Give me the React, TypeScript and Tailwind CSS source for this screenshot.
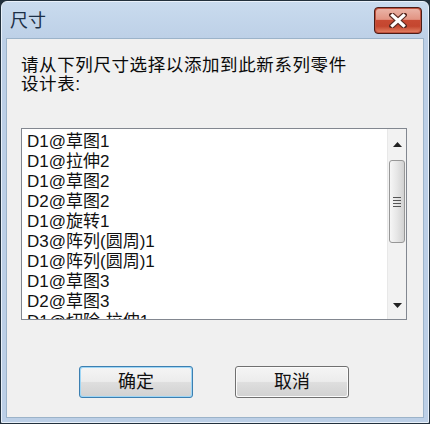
import React from "react";

const items = [
  "D1@草图1",
  "D1@拉伸2",
  "D1@草图2",
  "D2@草图2",
  "D1@旋转1",
  "D3@阵列(圆周)1",
  "D1@阵列(圆周)1",
  "D1@草图3",
  "D2@草图3",
  "D1@切除-拉伸1",
];

const font = { fontFamily: '"Liberation Sans", "Noto Sans CJK SC", sans-serif' };

function CloseButton() {
  return (
    <div className="w-[48px] h-[27px] rounded-[4px] border border-[#4a1d18] p-px bg-[#c0533f]">
      <div className="w-full h-full rounded-[3px] flex items-center justify-center bg-[linear-gradient(to_bottom,#eab3a6_0%,#e29483_45%,#c84a33_50%,#c4462f_75%,#e07c5f_100%)]">
        <svg width="18" height="15" viewBox="0 0 18 15">
          <path d="M3 2 L15 13 M15 2 L3 13" stroke="#5a2a22" strokeWidth="5.5" strokeLinecap="square" />
          <path d="M3.5 2.5 L14.5 12.5 M14.5 2.5 L3.5 12.5" stroke="#ffffff" strokeWidth="3.2" strokeLinecap="square" />
        </svg>
      </div>
    </div>
  );
}

function Scrollbar() {
  return (
    <div className="w-[19px] h-full flex flex-col bg-[#f2f2f2] border-l border-[#e8e8e8]">
      <div className="h-[31px] flex items-center justify-center">
        <svg width="9" height="5" viewBox="0 0 9 5">
          <path d="M0 5 L4.5 0 L9 5 Z" fill="#222" />
        </svg>
      </div>
      <div className="h-[83px] mx-[1px] rounded-[3px] border border-[#979797] bg-[linear-gradient(to_right,#f6f6f6,#e6e6e6_50%,#d2d2d2)] flex items-center justify-center">
        <div className="flex flex-col gap-[2px]">
          <div className="w-[8px] h-px bg-[#555]" />
          <div className="w-[8px] h-px bg-[#555]" />
          <div className="w-[8px] h-px bg-[#555]" />
          <div className="w-[8px] h-px bg-[#555]" />
        </div>
      </div>
      <div className="flex-1" />
      <div className="h-[28px] flex items-center justify-center">
        <svg width="9" height="5" viewBox="0 0 9 5">
          <path d="M0 0 L9 0 L4.5 5 Z" fill="#222" />
        </svg>
      </div>
    </div>
  );
}

function Button({ label, primary }: { label: string; primary?: boolean }) {
  return (
    <div
      className={
        "w-[114px] h-[32px] rounded-[3px] border p-px " +
        (primary ? "border-[#3c7fb1] bg-[#9fd6f5]" : "border-[#707070] bg-[#fbfbfb]")
      }
    >
      <div className="w-full h-full rounded-[2px] flex items-center justify-center bg-[linear-gradient(to_bottom,#f4f4f4_0%,#ececec_48%,#dedede_52%,#d2d2d2_100%)] text-[18px] leading-none text-[#111]">
        {label}
      </div>
    </div>
  );
}

export default function App() {
  return (
    <div className="w-[430px] h-[424px] bg-[#22303c] p-px" style={font}>
      <div className="w-full h-full flex flex-col rounded-t-[6px] bg-[linear-gradient(to_bottom,#c9dbee,#bccfe6_40px,#bccfe6)] border border-[#e9f1fa]">
        <div className="h-[36px] flex items-center justify-between pl-[8px] pr-[6px]">
          <span className="text-[18px] leading-none text-[#1d3047] mt-[2px]">尺寸</span>
          <CloseButton />
        </div>
        <div className="flex-1 mx-[4px] mb-[4px] bg-[#f0f0f0] border border-[#9cb3c9] flex flex-col pl-[14px]">
          <div className="mt-[17px] text-[17.5px] leading-[19px] text-[#0a0a0a] tracking-[0.6px]">
            请从下列尺寸选择以添加到此新系列零件
            <br />
            设计表:
          </div>
          <div className="mt-[34px] w-[386px] h-[192px] border border-[#828790] bg-white flex">
            <div className="flex-1 overflow-hidden pl-[5px] pt-[3px]">
              {items.map((it) => (
                <div key={it} className="h-[20px] text-[17px] leading-[20px] text-[#111] whitespace-nowrap">
                  {it}
                </div>
              ))}
            </div>
            <Scrollbar />
          </div>
          <div className="mt-[46px] flex gap-[42px] pl-[58px]">
            <Button label="确定" primary />
            <Button label="取消" />
          </div>
        </div>
      </div>
    </div>
  );
}
